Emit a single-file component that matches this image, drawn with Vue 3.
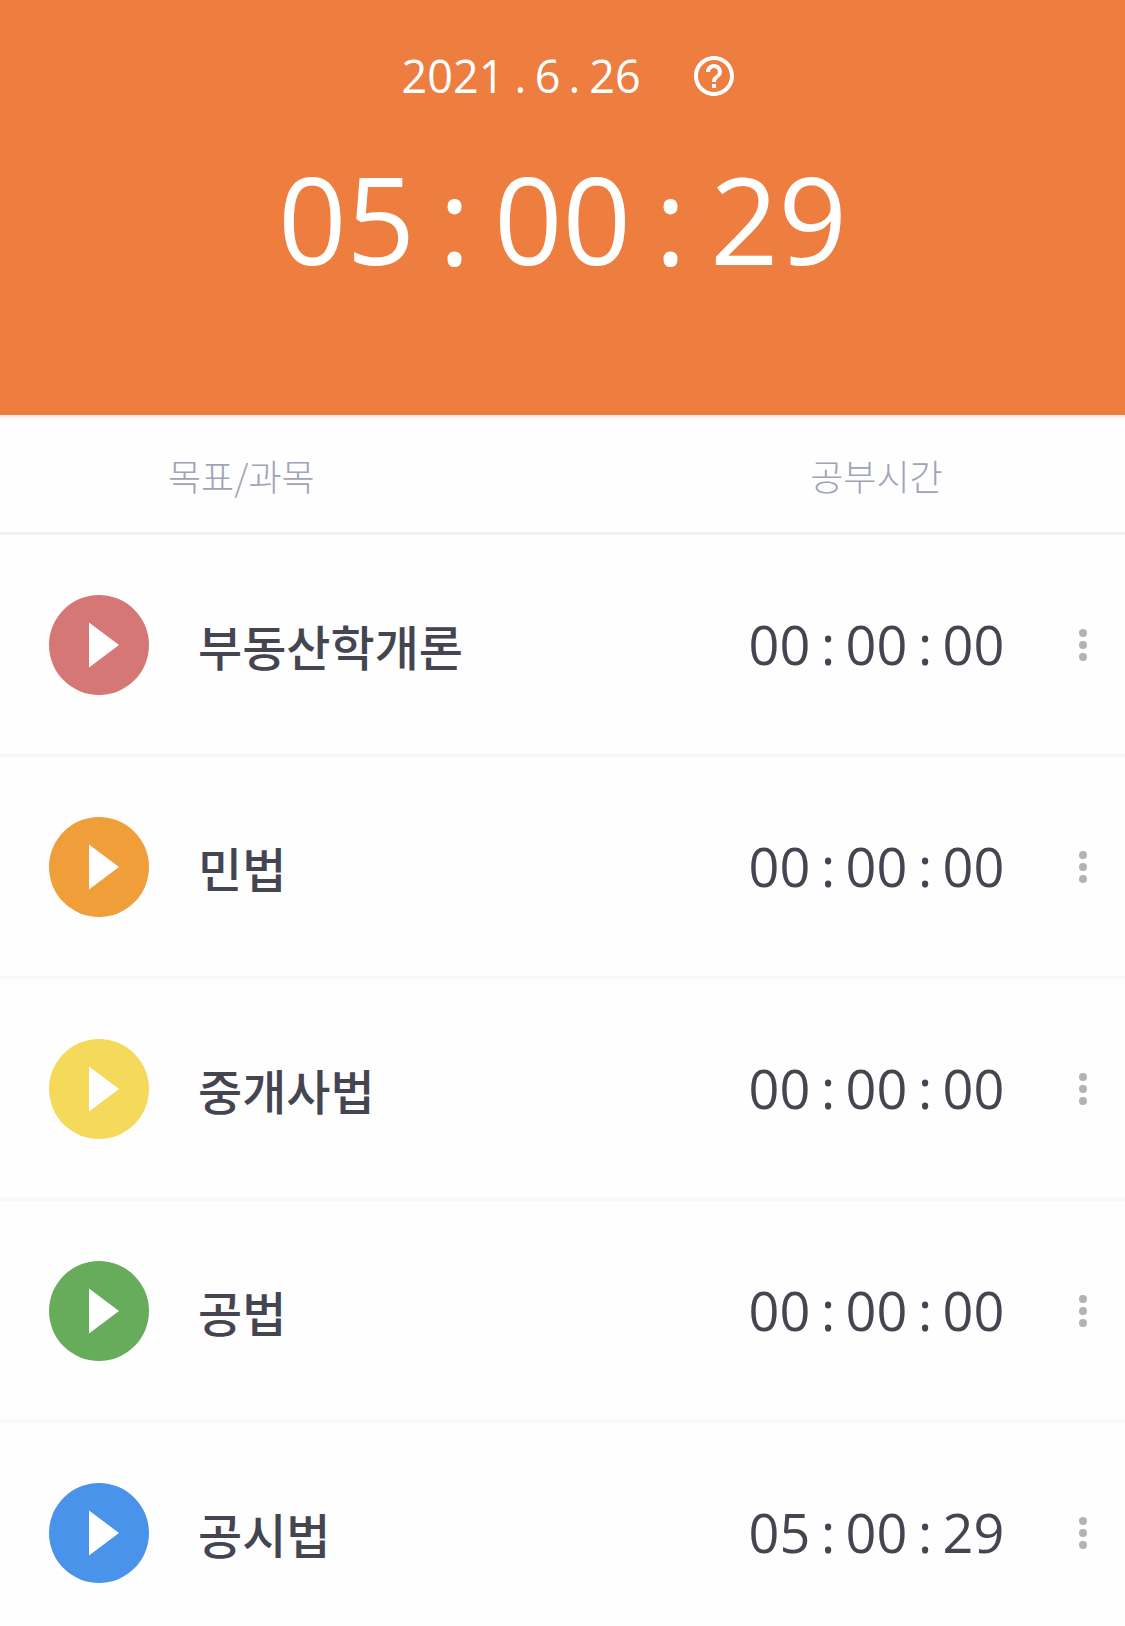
<script setup>
import { ref, computed } from 'vue';

const date = '2021.6.26';

const subjects = ref([
  { name: '부동산학개론', color: 'red', seconds: 0 },
  { name: '민법', color: 'orange', seconds: 0 },
  { name: '중개사법', color: 'yellow', seconds: 0 },
  { name: '공법', color: 'green', seconds: 0 },
  { name: '공시법', color: 'blue', seconds: 18029 },
]);

const totalSeconds = computed(() => {
  return subjects.value.reduce((sum, subject) => sum + subject.seconds, 0);
});

// 18029 -> ['05', ':', '00', ':', '29']
const clockParts = (seconds) => {
  const h = Math.floor(seconds / 3600);
  const m = Math.floor((seconds % 3600) / 60);
  const s = seconds % 60;
  const [hh, mm, ss] = [h, m, s].map((n) => String(n).padStart(2, '0'));
  return [hh, ':', mm, ':', ss];
};

const dateParts = date.split(/(\.)/);
</script>

<template>
  <div class="timer-page">
    <header class="summary">
      <div class="date-row">
        <div class="date">
          <span v-for="(part, i) in dateParts" :key="i" :class="'len-' + part.length">{{ part }}</span>
        </div>
        <button type="button" class="help-button" aria-label="도움말">
          <svg viewBox="2 2 20 20" fill="currentColor">
            <path
              d="M11 18h2v-2h-2v2zm1-16C6.48 2 2 6.48 2 12s4.48 10 10 10 10-4.48 10-10S17.52 2 12 2zm0 18c-4.41 0-8-3.59-8-8s3.59-8 8-8 8 3.59 8 8-3.59 8-8 8zm0-14c-2.21 0-4 1.79-4 4h2c0-1.1.9-2 2-2s2 .9 2 2c0 2-3 1.75-3 5h2c0-2.25 3-2.5 3-5 0-2.21-1.79-4-4-4z"
            />
          </svg>
        </button>
      </div>
      <h1 class="total">
        <span v-for="(part, i) in clockParts(totalSeconds)" :key="i" :class="{ colon: part === ':' }">{{ part }}</span>
      </h1>
    </header>

    <table class="subjects">
      <thead>
        <tr>
          <th colspan="2" class="subject-heading">목표/과목</th>
          <th>공부시간</th>
          <th></th>
        </tr>
      </thead>
      <tbody>
        <tr v-for="subject in subjects" :key="subject.name">
          <td class="play-cell">
            <button type="button" class="play-button" :class="subject.color" :aria-label="subject.name + ' 시작'">
              <svg viewBox="0 0 100 100" fill="#ffffff">
                <path d="M40 27.5L70 50L40 72.5z" />
              </svg>
            </button>
          </td>
          <td class="name">{{ subject.name }}</td>
          <td class="time">
            <span
              v-for="(part, i) in clockParts(subject.seconds)"
              :key="i"
              :class="{ colon: part === ':' }"
            >{{ part }}</span>
          </td>
          <td class="menu-cell">
            <button type="button" class="menu-button" :aria-label="subject.name + ' 메뉴'">
              <svg viewBox="0 0 48 48" fill="#b3b3b3">
                <circle cx="24" cy="12" r="4" />
                <circle cx="24" cy="24" r="4" />
                <circle cx="24" cy="36" r="4" />
              </svg>
            </button>
          </td>
        </tr>
      </tbody>
    </table>
  </div>
</template>

<style>
body {
  background-color: #fefefe;
  margin: 0;
}
</style>

<style scoped>
.timer-page {
  color: #454552;
  font-family: 'Noto Sans CJK KR', sans-serif;
  height: 100vh;
  overflow: hidden;
}

button {
  background: none;
  border: none;
  cursor: pointer;
  display: block;
  padding: 0;
}

svg {
  display: block;
  height: 100%;
  width: 100%;
}

.summary {
  background-color: #ee7d40;
  border-bottom: 3px solid #fdeee7;
  color: #ffffff;
  padding: 46px 0 124px;
  text-align: center;
}

.date-row {
  align-items: center;
  display: flex;
  gap: 52px;
  justify-content: center;
  padding-left: 8px;
}

.date,
.total,
.time {
  font-family: 'Open Sans', 'Noto Sans', sans-serif;
  font-weight: 400;
  white-space: nowrap;
}

.date span,
.total span,
.time span {
  display: inline-block;
  text-align: center;
}

.date {
  font-size: 45px;
  line-height: 60px;
}

.date .len-1 {
  width: 27px;
}

.date .len-2 {
  width: 54px;
}

.date .len-4 {
  width: 108px;
}

.help-button {
  color: #ffffff;
  height: 40px;
  width: 40px;
}

.total {
  font-size: 120px;
  line-height: 144px;
  margin: 41px 0 0;
}

.total span {
  width: 144px;
}

.total .colon {
  width: 72px;
}

.subjects {
  border-spacing: 0;
  width: 100%;
}

.subjects th {
  border-bottom: 3px solid #f1f1f2;
  box-sizing: border-box;
  color: #9ea5b4;
  font-size: 36px;
  font-weight: 300;
  height: 117px;
  line-height: 52px;
  padding: 0;
}

.subjects .subject-heading {
  padding-left: 168px;
  text-align: left;
}

.subjects td {
  border-bottom: 3px solid #f8f8f8;
  box-sizing: border-box;
  height: 222px;
  padding: 0;
}

.subjects .play-cell {
  padding-left: 49px;
  width: 198px;
}

.play-button {
  border-radius: 50%;
  height: 100px;
  width: 100px;
}

.red {
  background-color: #d57775;
}

.orange {
  background-color: #f09e39;
}

.yellow {
  background-color: #f5d95a;
}

.green {
  background-color: #67ac5b;
}

.blue {
  background-color: #4a93ea;
}

.name {
  font-size: 48px;
  font-weight: 500;
  line-height: 72px;
}

.subjects .time {
  font-size: 54px;
  line-height: 72px;
  padding-bottom: 2px;
  width: 259px;
}

.time span {
  width: 65px;
}

.time .colon {
  width: 32px;
}

.menu-cell {
  width: 119px;
}

.menu-button {
  height: 48px;
  margin-left: 53px;
  width: 48px;
}
</style>
